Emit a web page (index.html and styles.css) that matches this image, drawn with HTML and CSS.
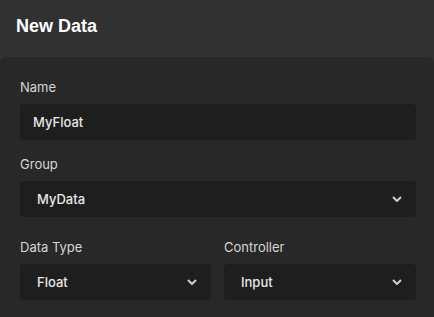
FILE: index.html
```html
<!DOCTYPE html>
<html>
<head>
<meta charset="utf-8">
<link rel="stylesheet" href="styles.css">
</head>
<body>
<div class="dialog">
  <div class="header">New Data</div>
  <div class="content">
    <div class="field">
      <div class="label">Name</div>
      <div class="input">MyFloat</div>
    </div>
    <div class="field field-group">
      <div class="label">Group</div>
      <div class="select"><span>MyData</span><svg class="chev" width="10" height="6" viewBox="0 0 10 6"><path d="M1 1 L5 5 L9 1" fill="none" stroke="#cfcfcf" stroke-width="2"/></svg></div>
    </div>
    <div class="row">
      <div class="field">
        <div class="label">Data Type</div>
        <div class="select"><span>Float</span><svg class="chev" width="10" height="6" viewBox="0 0 10 6"><path d="M1 1 L5 5 L9 1" fill="none" stroke="#cfcfcf" stroke-width="2"/></svg></div>
      </div>
      <div class="field">
        <div class="label">Controller</div>
        <div class="select"><span>Input</span><svg class="chev" width="10" height="6" viewBox="0 0 10 6"><path d="M1 1 L5 5 L9 1" fill="none" stroke="#cfcfcf" stroke-width="2"/></svg></div>
      </div>
    </div>
  </div>
</div>
</body>
</html>
```
FILE: styles.css
```css
html, body {
  margin: 0;
  padding: 0;
  background: #313131;
}
.dialog {
  width: 434px;
  height: 317px;
  display: flex;
  flex-direction: column;
  background: #313131;
  overflow: hidden;
}
.header {
  height: 57px;
  box-sizing: border-box;
  padding: 16px 16px 0 16px;
  font-family: "Liberation Sans", Arial, sans-serif;
  font-weight: bold;
  font-size: 18px;
  line-height: 21px;
  color: #ffffff;
}
.content {
  flex: 1;
  background: #282828;
  border-radius: 6px 6px 0 0;
  padding: 22px 18px 0 20px;
  font-family: Inter, "Noto Sans", sans-serif;
}
.label {
  font-size: 13px;
  line-height: 16px;
  color: #d6d6d6;
  margin-bottom: 9px;
}
.field-group {
  margin-top: 16px;
}
.input, .select {
  height: 36px;
  box-sizing: border-box;
  background: #1e1e1e;
  border-radius: 4px;
  display: flex;
  align-items: center;
  font-size: 13px;
  font-weight: 500;
  color: #e6e6e6;
}
.input {
  padding-left: 13px;
}
.select {
  padding: 0 14px 0 17px;
  justify-content: space-between;
}
.chev {
  display: block;
}
.row {
  margin-top: 22px;
  display: grid;
  grid-template-columns: 191px 192px;
  column-gap: 13px;
}
```
